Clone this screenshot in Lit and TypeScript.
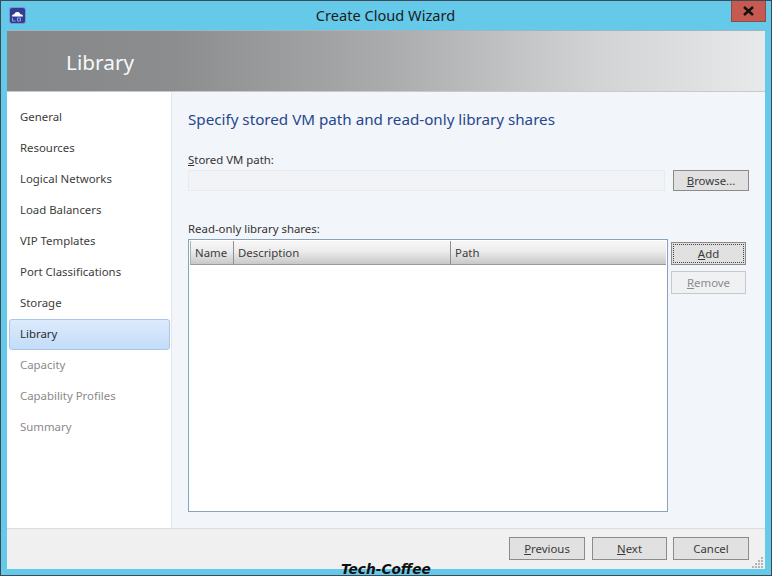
import { LitElement, html, css } from 'lit';
import { customElement } from 'lit/decorators.js';

const NAV_ITEMS = [
  { label: 'General' },
  { label: 'Resources' },
  { label: 'Logical Networks' },
  { label: 'Load Balancers' },
  { label: 'VIP Templates' },
  { label: 'Port Classifications' },
  { label: 'Storage' },
  { label: 'Library', selected: true },
  { label: 'Capacity', disabled: true },
  { label: 'Capability Profiles', disabled: true },
  { label: 'Summary', disabled: true },
];

@customElement('app-root')
export class AppRoot extends LitElement {
  static styles = css`
    :host {
      display: flex;
      flex-direction: column;
      box-sizing: border-box;
      position: relative;
      width: 772px;
      height: 576px;
      overflow: hidden;
      background: #65c9ea;
      border: 1px solid #3c4a55;
      font-family: 'Noto Sans', 'Open Sans', sans-serif;
      font-size: 11.4px;
      color: #333;
    }

    u {
      text-underline-offset: 1px;
    }

    .titlebar {
      display: flex;
      align-items: flex-start;
      height: 29px;
      flex: none;
      padding-left: 8px;
    }

    .app-icon {
      width: 17px;
      height: 17px;
      margin-top: 6px;
      flex: none;
    }

    .title {
      flex: 1;
      text-align: center;
      font-size: 14.6px;
      line-height: 29px;
      color: #1c1c1c;
      padding-left: 14px;
    }

    .close {
      width: 35px;
      height: 21px;
      margin-right: 5px;
      flex: none;
      display: flex;
      align-items: center;
      justify-content: center;
      box-sizing: border-box;
      background: #c75a50;
      border: 1px solid #8f4a48;
      border-top: none;
    }

    .window {
      flex: none;
      display: flex;
      flex-direction: column;
      height: 539px;
      margin: 0 6px;
      background: #f2f5f9;
    }

    .banner {
      flex: none;
      box-sizing: border-box;
      height: 62px;
      display: flex;
      align-items: center;
      padding: 2px 0 0 59px;
      border-top: 1px solid #a5b4bc;
      border-bottom: 1px solid #c9c9c9;
      background: linear-gradient(90deg, #858789 0%, #8b8d8f 22%, #a9abad 50%, #d2d3d4 78%, #e8e9ea 100%);
      color: #f6f8fa;
      font-size: 20.8px;
    }

    .body {
      flex: 1;
      min-height: 0;
      display: flex;
    }

    .nav {
      flex: none;
      box-sizing: border-box;
      width: 165px;
      padding: 10px 1px 0 2px;
      background: #fff;
      border-right: 1px solid #e3e5e8;
    }

    .nav-item {
      box-sizing: border-box;
      height: 31px;
      line-height: 30px;
      padding-left: 11px;
      color: #3c3c3c;
    }

    .nav-item.selected {
      border: 1px solid #a9c6e8;
      border-radius: 3px;
      line-height: 28px;
      padding-left: 10px;
      background: linear-gradient(180deg, #dcebfc 0%, #c3dcf9 100%);
      color: #2c2c2c;
    }

    .nav-item.disabled {
      color: #8a8a8a;
    }

    .main {
      flex: 1;
      min-width: 0;
      padding: 15px 16px 0;
      display: flex;
      flex-direction: column;
    }

    h1 {
      margin: 0;
      font-weight: 400;
      font-size: 15.2px;
      line-height: 24px;
      color: #26468f;
    }

    .label {
      line-height: 16px;
    }

    .path-label {
      margin-top: 21px;
    }

    .path-row {
      display: flex;
      align-items: flex-start;
      margin-top: 2px;
    }

    .path-input {
      box-sizing: border-box;
      width: 477px;
      height: 21px;
      border: 1px solid #e8eaec;
      background: #f1f3f6;
    }

    .btn {
      box-sizing: border-box;
      width: 76px;
      height: 23px;
      display: flex;
      align-items: center;
      justify-content: center;
      border: 1px solid #8b8b8b;
      background: #e1e1e1;
      color: #3a3a3a;
      position: relative;
    }

    .browse {
      margin-left: 8px;
      height: 21px;
    }

    .shares-label {
      margin-top: 30px;
    }

    .shares-row {
      display: flex;
      align-items: flex-start;
      margin-top: 2px;
    }

    .table {
      flex: none;
      box-sizing: border-box;
      width: 480px;
      height: 273px;
      background: #fff;
      border: 1px solid #86a3bf;
      padding: 1px 1px 0;
    }

    .thead {
      display: grid;
      grid-template-columns: 43px 217px 1fr;
      height: 23px;
      background: linear-gradient(180deg, #f7f7f7 0%, #ececec 45%, #c8c8c8 100%);
      border-bottom: 1px solid #9a9a9a;
      border-left: 1px solid #b0b0b0;
    }

    .thead div {
      padding-left: 4px;
      line-height: 24px;
      border-right: 1px solid #8f8f8f;
      color: #3c3c3c;
    }

    .thead div:last-child {
      border-right: none;
    }

    .side {
      margin-left: 3px;
      padding-top: 3px;
      display: flex;
      flex-direction: column;
      gap: 6px;
    }

    .side .btn {
      width: 75px;
    }

    .add::after {
      content: '';
      position: absolute;
      inset: 1px;
      border: 1px dotted #444;
    }

    .remove {
      border-color: #c6c8ca;
      background: #f0f1f3;
      color: #8c8c8c;
    }

    .footer {
      flex: none;
      box-sizing: border-box;
      height: 41px;
      position: relative;
      display: flex;
      justify-content: flex-end;
      gap: 6px;
      padding: 8px 16px 0 0;
      background: #f0f0f0;
      border-top: 1px solid #dcdcdc;
    }

    .footer .previous {
      margin-right: 1px;
    }

    .footer .next {
      width: 75px;
    }

    .grip {
      position: absolute;
      right: 1px;
      bottom: 1px;
      width: 12px;
      height: 12px;
    }

    .watermark {
      position: absolute;
      left: 340px;
      bottom: -2px;
      font-family: 'DejaVu Sans', sans-serif;
      font-size: 13.7px;
      font-weight: 700;
      font-style: italic;
      line-height: 16px;
      color: #111;
    }
  `;

  render() {
    return html`
      <div class="titlebar">
        <svg class="app-icon" viewBox="0 0 17 17">
          <rect x="0.5" y="0.5" width="16" height="16" rx="2.5" fill="#2f3f94" stroke="#7f93c8" />
          <path d="M3 9.5c0-1.5 1.2-2.3 2.3-2.1C5.8 5.6 7.2 4.8 8.7 5c1.4.2 2.4 1.2 2.6 2.4 1.4-.2 2.7.7 2.7 2.1z" fill="#fff" />
          <path d="M3.5 11v3h3M8.5 11h3v3h-3z" fill="none" stroke="#8fa4dc" stroke-width="1" />
        </svg>
        <div class="title">Create Cloud Wizard</div>
        <div class="close">
          <svg width="11" height="10" viewBox="0 0 11 10">
            <path d="M1 1l9 8M10 1L1 9" stroke="#111" stroke-width="2.4" fill="none" />
          </svg>
        </div>
      </div>
      <div class="window">
        <div class="banner">Library</div>
        <div class="body">
          <div class="nav">
            ${NAV_ITEMS.map(
              (item) => html`
                <div class="nav-item ${item.selected ? 'selected' : ''} ${item.disabled ? 'disabled' : ''}">
                  ${item.label}
                </div>
              `
            )}
          </div>
          <div class="main">
            <h1>Specify stored VM path and read-only library shares</h1>
            <div class="label path-label"><u>S</u>tored VM path:</div>
            <div class="path-row">
              <div class="path-input"></div>
              <div class="btn browse"><span><u>B</u>rowse...</span></div>
            </div>
            <div class="label shares-label">Read-only library shares:</div>
            <div class="shares-row">
              <div class="table">
                <div class="thead">
                  <div>Name</div>
                  <div>Description</div>
                  <div>Path</div>
                </div>
              </div>
              <div class="side">
                <div class="btn add"><span><u>A</u>dd</span></div>
                <div class="btn remove"><span><u>R</u>emove</span></div>
              </div>
            </div>
          </div>
        </div>
        <div class="footer">
          <div class="btn previous"><span><u>P</u>revious</span></div>
          <div class="btn next"><span><u>N</u>ext</span></div>
          <div class="btn"><span>Cancel</span></div>
          <svg class="grip" viewBox="0 0 12 12" fill="#b5b5b5">
            <rect x="9" y="1" width="2" height="2" />
            <rect x="6" y="4" width="2" height="2" />
            <rect x="9" y="4" width="2" height="2" />
            <rect x="3" y="7" width="2" height="2" />
            <rect x="6" y="7" width="2" height="2" />
            <rect x="9" y="7" width="2" height="2" />
            <rect x="0" y="10" width="2" height="2" />
            <rect x="3" y="10" width="2" height="2" />
            <rect x="6" y="10" width="2" height="2" />
            <rect x="9" y="10" width="2" height="2" />
          </svg>
        </div>
      </div>
      <div class="watermark">Tech-Coffee</div>
    `;
  }
}
